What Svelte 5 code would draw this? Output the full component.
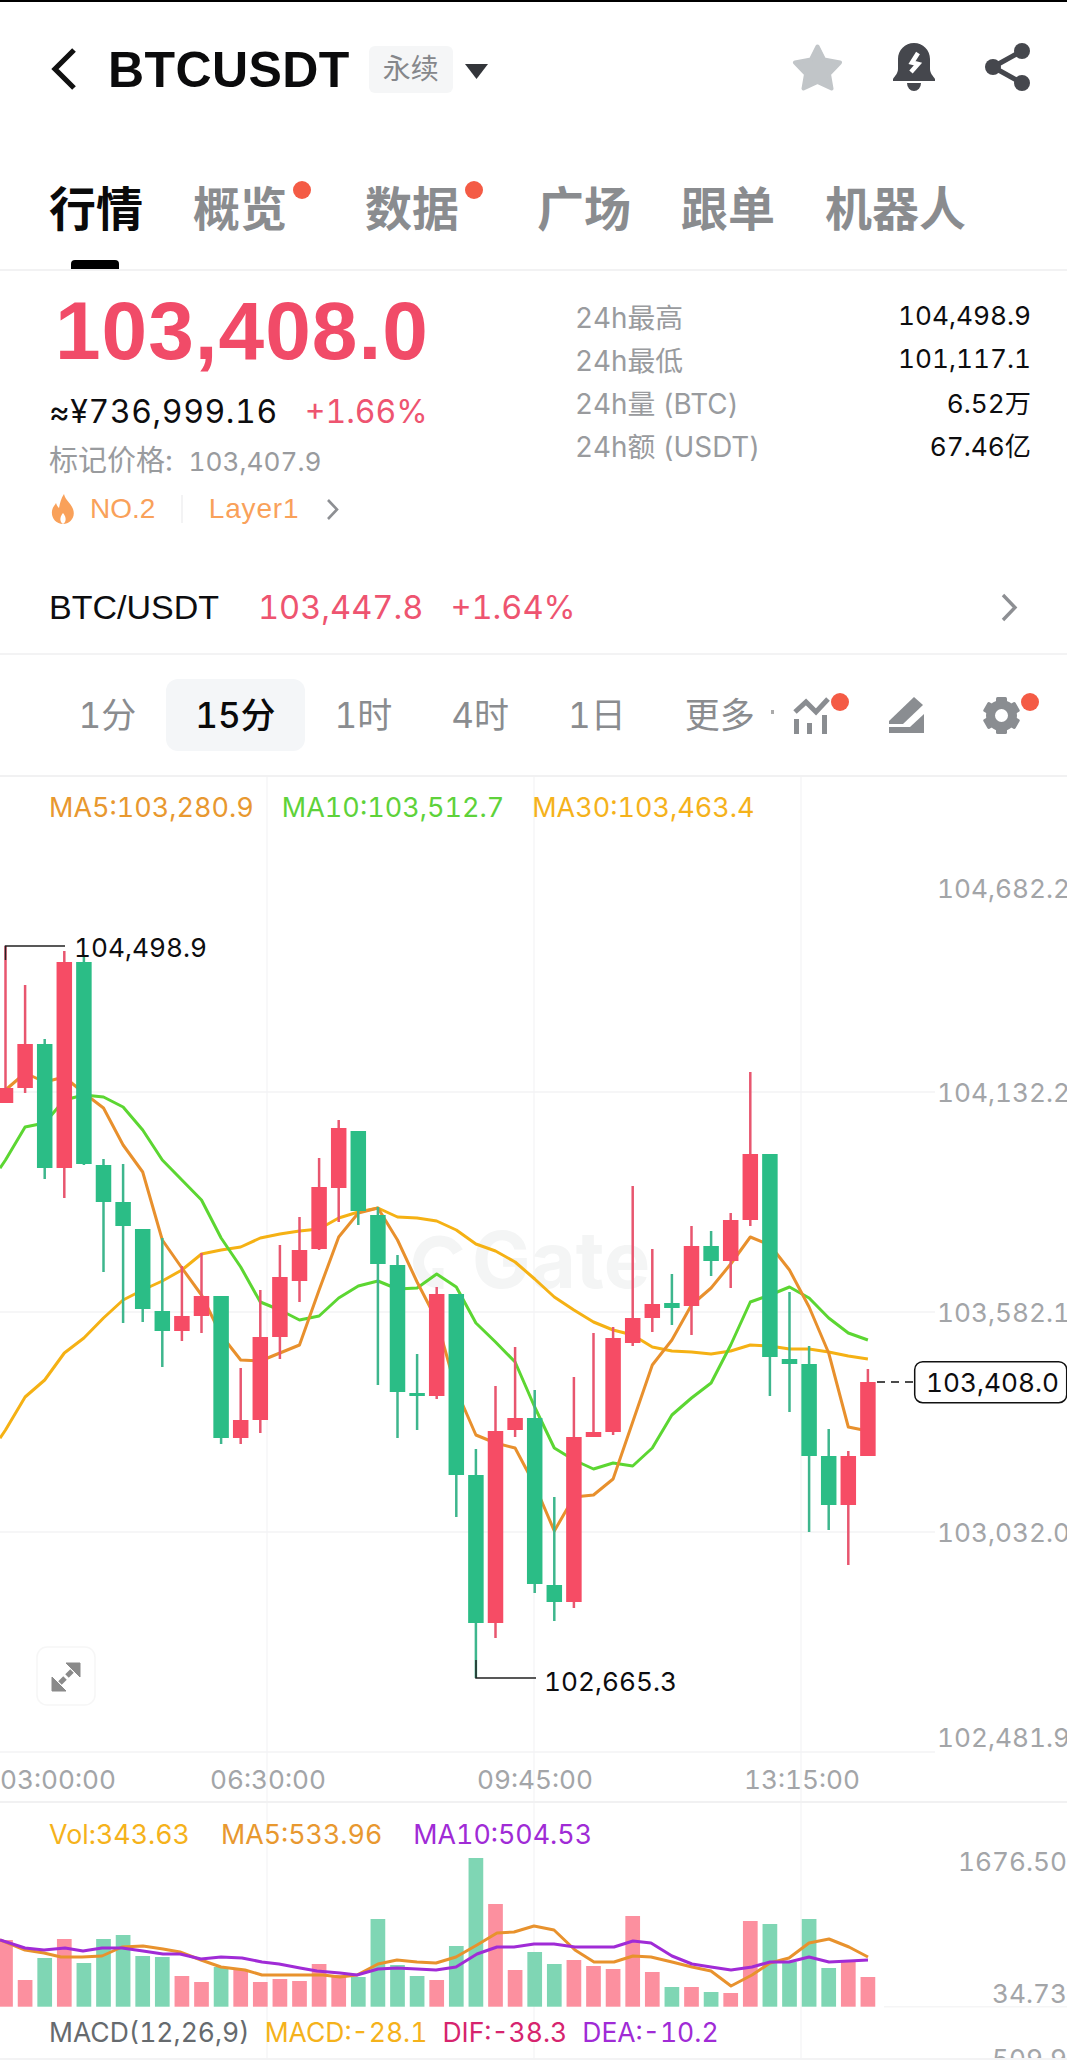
<script>
  // BTCUSDT perpetual market screen: header, tabs, ticker stats, candle chart with vol pane
  const tabs = [
    { label: '行情', active: true },
    { label: '概览', dot: true },
    { label: '数据', dot: true },
    { label: '广场' },
    { label: '跟单' },
    { label: '机器人' }
  ];
  const stats = [
    ['24h最高', '104,498.9'],
    ['24h最低', '101,117.1'],
    ['24h量 (BTC)', '6.52万'],
    ['24h额 (USDT)', '67.46亿']
  ];
  const periods = ['1分', '15分', '1时', '4时', '1日', '更多'];

  const STEP = 19.6;
  const xAt = (i) => 5.5 + STEP * i;

  // [colour, wick high, body top, body bottom, wick low] in page pixels
  const candles = [
    ['r', 946, 1088, 1103, 1103], ['r', 985, 1044, 1088, 1093], ['g', 1039, 1044, 1168, 1179],
    ['r', 951, 962, 1168, 1198], ['g', 957, 962, 1164, 1165], ['g', 1159, 1165, 1202, 1272],
    ['g', 1164, 1202, 1226, 1323], ['g', 1229, 1229, 1309, 1322], ['g', 1238, 1311, 1331, 1367],
    ['r', 1266, 1316, 1331, 1341], ['r', 1253, 1296, 1316, 1333], ['g', 1296, 1296, 1438, 1444],
    ['r', 1368, 1420, 1438, 1444], ['r', 1290, 1337, 1420, 1433], ['r', 1245, 1277, 1337, 1359],
    ['r', 1217, 1250, 1281, 1302], ['r', 1158, 1187, 1249, 1250], ['r', 1120, 1128, 1188, 1222],
    ['g', 1131, 1131, 1211, 1225], ['g', 1207, 1215, 1264, 1385], ['g', 1255, 1265, 1392, 1438],
    ['g', 1354, 1393, 1396, 1430], ['r', 1287, 1294, 1396, 1399], ['g', 1294, 1294, 1475, 1517],
    ['g', 1449, 1475, 1623, 1678], ['r', 1386, 1431, 1623, 1638], ['r', 1347, 1418, 1430, 1437],
    ['g', 1390, 1418, 1584, 1593], ['g', 1497, 1585, 1602, 1621], ['r', 1377, 1437, 1602, 1608],
    ['r', 1333, 1432, 1437, 1437], ['r', 1327, 1338, 1432, 1435], ['r', 1186, 1318, 1343, 1346],
    ['r', 1249, 1304, 1318, 1332], ['g', 1274, 1303, 1308, 1325], ['r', 1226, 1246, 1306, 1335],
    ['g', 1231, 1246, 1261, 1276], ['r', 1213, 1220, 1261, 1288], ['r', 1072, 1154, 1220, 1226],
    ['g', 1154, 1154, 1357, 1396], ['g', 1292, 1359, 1364, 1412], ['g', 1346, 1364, 1456, 1532],
    ['g', 1429, 1456, 1505, 1530], ['r', 1451, 1456, 1505, 1565], ['r', 1369, 1382, 1456, 1456]
  ];

  const ma5 = [1090,1073,1082,1077,1093,1108,1145,1172,1240,1268,1295,1335,1360,1361,1353,1345,1290,1237,1213,1208,1240,1282,1320,1390,1435,1443,1448,1485,1531,1497,1495,1479,1422,1365,1340,1305,1288,1264,1237,1245,1270,1307,1353,1427,1431];
  const ma10 = [1160,1127,1123,1100,1095,1097,1107,1130,1160,1180,1200,1238,1267,1302,1310,1320,1316,1298,1286,1281,1289,1288,1274,1287,1323,1342,1362,1407,1448,1460,1469,1463,1466,1448,1415,1398,1383,1345,1302,1295,1287,1298,1318,1333,1340];
  const ma30 = [1430,1397,1380,1353,1338,1318,1300,1290,1281,1270,1254,1250,1247,1238,1234,1231,1229,1218,1212,1208,1217,1218,1221,1230,1244,1251,1262,1279,1297,1310,1322,1330,1335,1347,1351,1352,1354,1351,1345,1346,1349,1349,1352,1356,1359];

  const toPoints = (ys) => '0,' + (ys[0] + (ys[0] - ys[1]) * 0.25) + ' ' + ys.map((y, i) => xAt(i) + ',' + y).join(' ');

  // volume bars: [colour, top in page pixels]
  const VOL_BASE = 2006.7;
  const volumes = [
    ['r',1940],['r',1980],['g',1958],['r',1939],['g',1963],['g',1939],['g',1935],['g',1956],['g',1957],
    ['r',1976],['r',1982],['g',1967],['r',1970],['r',1982],['r',1979],['r',1981],['r',1964],['r',1975],
    ['g',1977],['g',1919],['g',1965],['g',1976],['r',1980],['g',1946],['g',1858],['r',1904],['r',1970],
    ['g',1952],['g',1964],['r',1960],['r',1966],['r',1969],['r',1916],['r',1972],['g',1987],['r',1987],
    ['g',1992],['r',1993],['r',1921],['g',1924],['g',1962],['g',1919],['g',1968],['r',1962],['r',1977]
  ];

  const volMa5 = '0,1940 25,1950 44,1953 61,1957 82,1957 102,1956 122,1947 143,1946 163,1949 180,1952 201,1960 221,1967 245,1970 262,1975 283,1975 303,1975 323,1975 340,1977 357,1975 378,1964 397,1960 417,1962 436,1963 456,1957 477,1945 497,1933 514,1932 534,1926 554,1930 575,1950 594,1962 614,1962 633,1956 651,1957 672,1962 692,1967 711,1971 731,1986 752,1975 770,1963 789,1958 809,1943 829,1939 849,1947 868,1957';
  const volMa10 = '0,1940 25,1948 44,1950 65,1948 83,1951 102,1948 122,1948 143,1951 163,1954 180,1954 201,1959 221,1957 242,1958 262,1962 279,1964 300,1968 317,1971 340,1973 357,1975 378,1969 397,1968 417,1969 436,1970 456,1967 477,1954 497,1947 514,1947 534,1944 554,1944 575,1947 594,1947 614,1947 633,1941 651,1943 672,1956 692,1964 711,1967 731,1970 752,1967 770,1962 789,1962 809,1957 829,1962 849,1961 868,1960';

  const gridX = [267, 534, 801];
  const gridY = [1092, 1312, 1532, 1752];
  const axisLabels = [['104,682.2', 898], ['104,132.2', 1102], ['103,582.1', 1322], ['103,032.0', 1542], ['102,481.9', 1747]];
  const timeLabels = [['03:00:00', 0], ['06:30:00', 210], ['09:45:00', 477], ['13:15:00', 744]];
</script>

<div class="page">
  <header class="header">
    <svg class="back" width="26" height="42" viewBox="0 0 26 42">
      <polyline points="23,2 4,21 23,40" fill="none" stroke="#111" stroke-width="5.2" />
    </svg>
    <h1 class="symbol">BTCUSDT</h1>
    <span class="tag">永续</span>
    <svg class="caret" width="23" height="15" viewBox="0 0 23 15"><polygon points="0,0 23,0 11.5,15" fill="#33353a" /></svg>
    <div class="header-icons">
      <svg width="51" height="47" viewBox="0 0 51 47">
        <polygon points="25.5,2.5 32,15.5 48,18.5 37,30 39.5,44.5 25.5,38 11.5,44.5 14,30 3,18.5 19,15.5" fill="#c1c5c8" stroke="#c1c5c8" stroke-width="4" stroke-linejoin="round" />
      </svg>
      <svg width="42" height="48" viewBox="0 0 42 48">
        <path d="M21 0C12 0 5 7 5 16V26C5 30 2 33 0 36V38H42V36C40 33 37 30 37 26V16C37 7 30 0 21 0Z" fill="#45474d" />
        <path d="M14 40H28A7 8 0 0 1 14 40Z" fill="#45474d" />
        <polyline points="25,10 19,19.5 25,21 18,29" fill="none" stroke="#fff" stroke-width="4.5" />
      </svg>
      <svg width="46" height="48" viewBox="0 0 46 48">
        <line x1="37" y1="8" x2="8" y2="24" stroke="#45474d" stroke-width="5" />
        <line x1="8" y1="24" x2="37" y2="40" stroke="#45474d" stroke-width="5" />
        <circle cx="37" cy="8" r="8" fill="#45474d" />
        <circle cx="8" cy="24" r="8" fill="#45474d" />
        <circle cx="37" cy="40" r="8" fill="#45474d" />
      </svg>
    </div>
  </header>

  <nav class="tabs">
    {#each tabs as tab}
      <span class="tab" class:active={tab.active} class:has-dot={tab.dot}>
        {tab.label}
        {#if tab.dot}<i class="dot tab-dot"></i>{/if}
      </span>
    {/each}
  </nav>

  <section class="ticker">
    <div class="ticker-left">
      <div class="price">103,408.0</div>
      <div class="quote">
        <span class="cny">≈¥736,999.16</span>
        <span class="change">+1.66%</span>
      </div>
      <div class="mark">标记价格: <span class="mark-num">103,407.9</span></div>
      <div class="rank">
        <svg width="24" height="30" viewBox="0 0 24 30">
          <path d="M13 0C14 6 20 9 22 15C25 23 19 30 12 30C5 30 0 24 1 17C1.5 13 4 11 5 9C6 12 7 13 8 14C9 9 10 4 13 0Z" fill="#f9a15a" />
          <path d="M12 30C9 28 8 24 12 19C16 24 15 28 12 30Z" fill="#fff" />
        </svg>
        <span class="no">NO.2</span>
        <i class="rank-sep"></i>
        <span class="layer">Layer1</span>
        <svg class="rank-arrow" width="13" height="23" viewBox="0 0 13 23">
          <polyline points="2,2 11,11.5 2,21" fill="none" stroke="#8d8f93" stroke-width="2.6" />
        </svg>
      </div>
    </div>
    <dl class="stats">
      {#each stats as [name, value]}
        <div class="stat">
          <dt>{name}</dt>
          <dd>{value}</dd>
        </div>
      {/each}
    </dl>
  </section>

  <div class="spot">
    <span class="spot-name">BTC/USDT</span>
    <span class="spot-price">103,447.8</span>
    <span class="spot-change">+1.64%</span>
    <svg class="spot-arrow" width="17" height="29" viewBox="0 0 17 29">
      <polyline points="2,2 14,14.5 2,27" fill="none" stroke="#8d8f93" stroke-width="3.4" />
    </svg>
  </div>

  <div class="periods">
    {#each periods as p, i}
      <span class="period" class:current={i === 1}>{p}</span>
    {/each}
    <i class="more-tick"></i>
    <div class="tools">
      <span class="tool">
        <svg width="37" height="37" viewBox="0 0 37 37" fill="#8a8d91">
          <polyline points="2,15 13,5 23,15 35,2" fill="none" stroke="#8a8d91" stroke-width="5" />
          <rect x="1" y="22" width="5" height="15" />
          <rect x="14" y="26" width="5" height="11" />
          <rect x="29" y="18" width="5" height="19" />
        </svg>
        <i class="dot tool-dot"></i>
      </span>
      <span class="tool">
        <svg width="37" height="37" viewBox="0 0 37 37" fill="#8a8d91">
          <polygon points="26,0 35,8 15,27 1,27 1,24" />
          <polygon points="1,30 36,30 36,36 1,36" />
          <polygon points="22,30 36,17 36,30" />
        </svg>
      </span>
      <span class="tool">
        <svg width="37" height="37" viewBox="0 0 37 37" fill="#8a8d91">
          {#each [0, 60, 120, 180, 240, 300] as deg}
            <rect x="13" y="0" width="11" height="8" rx="1.5" transform="rotate({deg} 18.5 18.5)" />
          {/each}
          <circle cx="18.5" cy="18.5" r="11" fill="none" stroke="#8a8d91" stroke-width="9" />
        </svg>
        <i class="dot tool-dot"></i>
      </span>
    </div>
  </div>

  <div class="chart">
    <svg class="plot" width="1067" height="1289" viewBox="0 777 1067 1289">
      <!-- grid -->
      {#each gridX as x}
        <line x1={x} y1="777" x2={x} y2="2058" stroke="#f6f6f7" stroke-width="1.5" />
      {/each}
      {#each gridY as y}
        <line x1="0" y1={y} x2="935" y2={y} stroke="#f3f3f4" stroke-width="1.5" />
      {/each}
      <line x1="0" y1="1802" x2="1067" y2="1802" stroke="#f1f1f2" stroke-width="2" />
      <line x1="884" y1="2006.7" x2="1067" y2="2006.7" stroke="#f5f5f6" stroke-width="1.5" />

      <!-- watermark -->
      <path d="M458 1252A21 21 0 1 0 438 1283V1268" fill="none" stroke="#f4f5f5" stroke-width="11" />
      <text class="watermark" x="472" y="1288">Gate</text>

      <!-- moving averages sit behind the candles -->
      <polyline points={toPoints(ma30)} class="line" stroke="#f5b114" />
      <polyline points={toPoints(ma10)} class="line" stroke="#5cd632" />
      <polyline points={toPoints(ma5)} class="line" stroke="#e8902d" />

      {#each candles as [kind, high, top, bottom, low], i}
        <line x1={xAt(i)} y1={high} x2={xAt(i)} y2={low} stroke={kind === 'r' ? '#e8566f' : '#3eb68d'} stroke-width="2.5" />
        <rect x={xAt(i) - 7.75} y={top} width="15.5" height={bottom - top} fill={kind === 'r' ? '#f64c65' : '#2bbd86'} />
      {/each}

      <!-- high and low markers -->
      <polyline points="5.5,960 5.5,946 65,946" fill="none" stroke="#222" stroke-width="1.5" />
      <text class="mark-label" x="74" y="957">104,498.9</text>
      <polyline points="476,1660 476,1678 536,1678" fill="none" stroke="#222" stroke-width="1.5" />
      <text class="mark-label" x="544" y="1691">102,665.3</text>

      <!-- last price -->
      <line x1="877" y1="1382" x2="914" y2="1382" stroke="#111" stroke-width="1.5" stroke-dasharray="8 6" />
      <rect x="914.7" y="1361.7" width="152" height="41" rx="8" fill="#fff" stroke="#111" stroke-width="1.5" />
      <text class="mark-label" x="926" y="1392">103,408.0</text>

      <!-- axes -->
      {#each axisLabels as [label, y]}
        <text class="axis" x="937" {y}>{label}</text>
      {/each}
      {#each timeLabels as [label, x]}
        <text class="axis" {x} y="1789">{label}</text>
      {/each}
      <text class="axis" x="1067" y="1871" text-anchor="end">1676.50</text>
      <text class="axis" x="1067" y="2003" text-anchor="end">34.73</text>
      <text class="axis" x="1067" y="2068" text-anchor="end">509.9</text>

      <!-- volume pane -->
      {#each volumes as [kind, top], i}
        <rect x={xAt(i) - 7.35} y={top} width="14.7" height={VOL_BASE - top} fill={kind === 'r' ? '#fc909f' : '#7fd6b4'} />
      {/each}
      <polyline points={volMa5} class="line" stroke="#e8922d" />
      <polyline points={volMa10} class="line" stroke="#a02bd6" />

      <rect x="0" y="2058" width="1067" height="8" fill="#fff" />
      <rect x="0" y="2058" width="1067" height="2" fill="#f3f3f4" />

      <!-- fullscreen button -->
      <rect x="37" y="1647" width="58" height="58" rx="10" fill="#fff" stroke="#f6f6f6" stroke-width="1.5" />
      <g fill="#8a8a8a" stroke="#8a8a8a">
        <polygon points="66,1663 80,1663 80,1677" />
        <line x1="72" y1="1671" x2="67" y2="1676" stroke-width="5" />
        <polygon points="52,1677 52,1691 66,1691" />
        <line x1="60" y1="1683" x2="65" y2="1678" stroke-width="5" />
      </g>
    </svg>

    <div class="legend legend-main">
      <span class="c-orange">MA5:103,280.9</span>
      <span class="c-green">MA10:103,512.7</span>
      <span class="c-yellow">MA30:103,463.4</span>
    </div>
    <div class="legend legend-vol">
      <span class="c-yellow">Vol:343.63</span>
      <span class="c-orange">MA5:533.96</span>
      <span class="c-purple">MA10:504.53</span>
    </div>
    <div class="legend legend-macd">
      <span class="c-gray">MACD(12,26,9)</span>
      <span class="c-yellow">MACD:-28.1</span>
      <span class="c-pink">DIF:-38.3</span>
      <span class="c-purple">DEA:-10.2</span>
    </div>
  </div>
</div>

<style>
  :global(body) {
    margin: 0;
    background: #fff;
  }

  .page {
    width: 1067px;
    height: 2066px;
    overflow: hidden;
    background: #fff;
    font-family: Inter, "Noto Sans CJK SC", sans-serif;
    font-variant-numeric: tabular-nums;
    border-top: 2px solid #000;
    box-sizing: border-box;
  }

  /* header */
  .header {
    display: flex;
    align-items: flex-start;
    height: 132px;
    padding: 44px 36px 0 51px;
    box-sizing: border-box;
  }

  .back { margin-right: 31px; margin-top: 2px; }

  .symbol {
    margin: 1px 0 0;
    font-family: "Liberation Sans", Arial, sans-serif;
    font-size: 50px;
    line-height: 46px;
    font-weight: 700;
    letter-spacing: 0.4px;
    color: #0b0b0c;
  }

  .tag {
    margin-left: 19px;
    width: 84px;
    height: 47px;
    border-radius: 6px;
    background: #f5f6f7;
    color: #85878b;
    font-size: 28px;
    line-height: 47px;
    text-align: center;
  }

  .caret { margin: 18px 0 0 12px; }

  .header-icons {
    margin-left: auto;
    display: flex;
    align-items: center;
    gap: 50px;
    margin-top: -3px;
  }

  /* tabs */
  .tabs {
    display: flex;
    gap: 50px;
    padding: 0 0 38px 49px;
    height: 86px;
    margin-top: 51px;
    box-sizing: border-box;
    border-bottom: 2px solid #f2f2f3;
  }

  .tab {
    position: relative;
    font-size: 47px;
    line-height: 47px;
    font-weight: 700;
    color: #8a8c8f;
    white-space: nowrap;
  }
  .tab.has-dot { margin-right: 28px; }
  .tab.active { color: #0a0a0a; }
  .tab.active::after {
    content: '';
    position: absolute;
    left: 22px;
    top: 75px;
    width: 48px;
    height: 9px;
    border-radius: 4px 4px 0 0;
    background: #000;
  }

  .dot {
    display: block;
    width: 18px;
    height: 18px;
    border-radius: 50%;
    background: #f45b45;
  }
  .tab-dot {
    position: absolute;
    right: -24px;
    top: -4px;
  }

  /* ticker */
  .ticker {
    display: grid;
    grid-template-columns: 526px 1fr;
    padding: 20px 36px 0 49px;
    height: 290px;
    box-sizing: border-box;
  }

  .price {
    font-family: "Liberation Sans", Arial, sans-serif;
    font-size: 82px;
    line-height: 80px;
    font-weight: 700;
    letter-spacing: 1px;
    color: #f14b68;
    padding-left: 6px;
  }

  .quote {
    display: flex;
    gap: 27px;
    margin-top: 20px;
    height: 40px;
    align-items: center;
    font-size: 32px;
  }
  .cny { color: #0d0d0f; letter-spacing: 0.6px; }
  .change { color: #ee5470; }

  .mark {
    margin-top: 10px;
    height: 40px;
    line-height: 40px;
    font-size: 29px;
    color: #999b9e;
  }
  .mark-num { font-size: 26.2px; margin-left: 8px; }

  .rank {
    display: flex;
    align-items: center;
    margin-top: 8px;
    height: 40px;
    padding-left: 2px;
    font-size: 27px;
    color: #f9a15a;
  }
  .no { margin-left: 15px; font-family: "Liberation Sans", Arial, sans-serif; font-size: 28px; }
  .rank-sep { width: 1.5px; height: 28px; background: #f3f3f4; margin: 0 26px; }
  .layer { font-size: 28px; font-family: "Liberation Sans", Arial, sans-serif; letter-spacing: 0.8px; }
  .rank-arrow { margin-left: 27px; }

  .stats {
    margin: 3px 0 0;
  }
  .stat {
    display: flex;
    justify-content: space-between;
    align-items: center;
    height: 43px;
  }
  .stat dt {
    color: #999b9e;
    font-size: 27.8px;
  }
  .stat dd {
    margin: 0;
    color: #0d0d0f;
    font-size: 26.2px;
  }

  /* spot link */
  .spot {
    display: flex;
    align-items: center;
    height: 94px;
    padding: 0 49px;
    box-sizing: border-box;
    border-bottom: 2px solid #f3f3f4;
    font-size: 32.6px;
  }
  .spot-name { color: #0d0d0f; font-family: "Liberation Sans", Arial, sans-serif; font-size: 34px; }
  .spot-price { color: #ee5470; margin-left: 39px; }
  .spot-change { color: #ee5470; margin-left: 27px; }
  .spot-arrow { margin-left: auto; }

  /* period selector */
  .periods {
    position: relative;
    display: flex;
    align-items: center;
    height: 122px;
    padding: 0 47px 0 49px;
    box-sizing: border-box;
    border-bottom: 2px solid #f1f1f2;
  }
  .period {
    height: 72px;
    line-height: 72px;
    padding: 0 29.5px;
    border-radius: 12px;
    font-size: 35px;
    color: #8a8c8f;
    white-space: nowrap;
  }
  .period.current {
    background: #f4f6f8;
    color: #0a0a0a;
    font-weight: 500;
  }
  .more-tick {
    position: absolute;
    left: 771px;
    top: 55px;
    width: 3px;
    height: 4px;
    background: #aaa;
  }
  .tools {
    position: absolute;
    right: 47px;
    top: 42px;
    display: flex;
    gap: 58px;
  }
  .tool {
    position: relative;
    display: block;
    height: 37px;
  }
  .tool svg { display: block; }
  .tool-dot {
    position: absolute;
    left: 38px;
    top: -4px;
  }

  /* chart */
  .chart {
    position: relative;
    height: 1289px;
  }
  .plot { display: block; }

  .line {
    fill: none;
    stroke-width: 3;
    stroke-linejoin: round;
  }
  .mark-label {
    font-size: 26.2px;
    fill: #0d0d0f;
  }
  .axis {
    font-size: 26.2px;
    fill: #a3a5a8;
  }
  .watermark {
    font-size: 78px;
    font-weight: 700;
    fill: #f4f5f5;
  }

  .legend {
    position: absolute;
    left: 49px;
    display: flex;
    line-height: 30px;
    white-space: nowrap;
  }
  .legend-main { top: 16px; gap: 28px; font-size: 27px; }
  .legend-vol { top: 1042px; gap: 31px; font-size: 26.8px; }
  .legend-macd { top: 1240px; gap: 15px; font-size: 26.5px; }

  .c-orange { color: #e8982f; }
  .c-green { color: #5ed23a; }
  .c-yellow { color: #f5b21b; }
  .c-purple { color: #a02bd6; }
  .c-pink { color: #d6246e; }
  .c-gray { color: #666a6e; }
</style>
